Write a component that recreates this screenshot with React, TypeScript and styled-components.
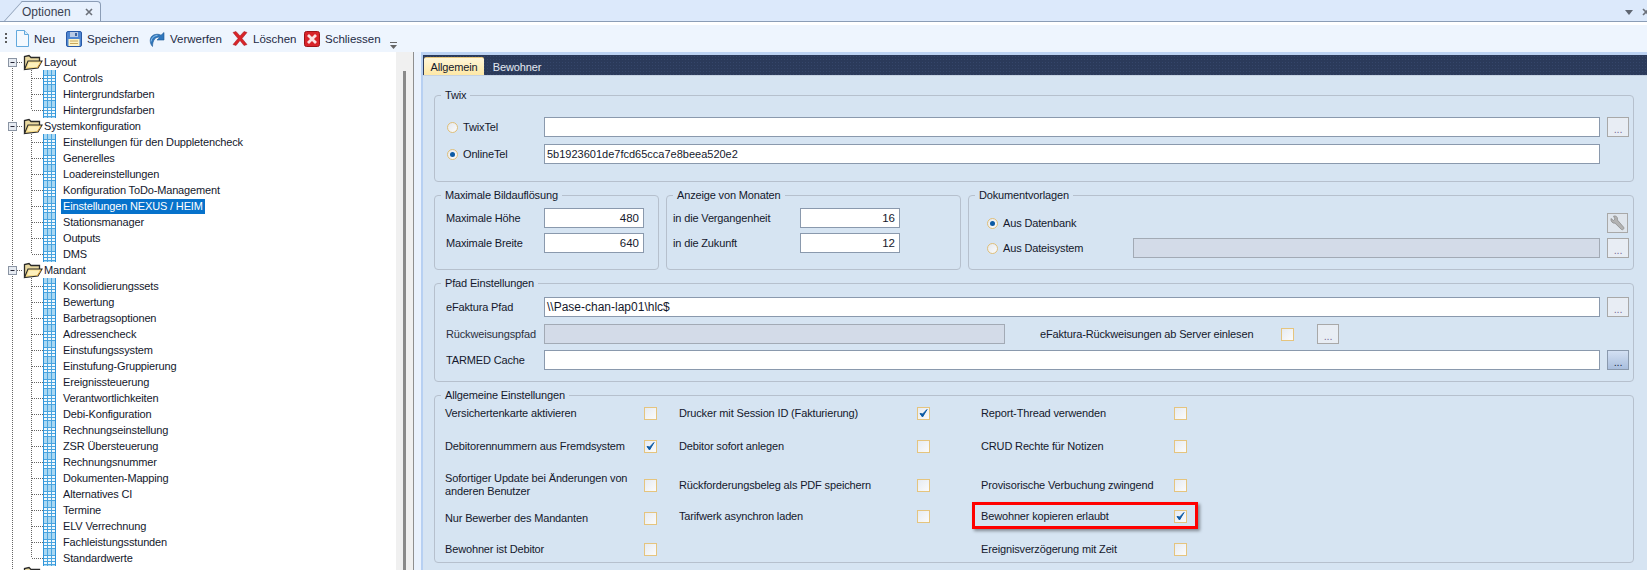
import React from "react"
import styled, { createGlobalStyle } from "styled-components"

const GlobalStyle = createGlobalStyle`
  html, body {
    margin: 0;
    width: 1647px;
    height: 570px;
    overflow: hidden;
    background: #d6e4f2;
  }
  * {
    box-sizing: border-box;
  }
`

const Page = styled.div`
  display: flex;
  flex-direction: column;
  width: 1647px;
  height: 570px;
  overflow: hidden;
  font-family: "Liberation Sans", Arial, sans-serif;
  font-size: 11px;
  letter-spacing: -0.15px;
  color: #14182c;
`

/* document tab strip */
const TabStrip = styled.div`
  display: flex;
  align-items: flex-end;
  justify-content: space-between;
  flex: none;
  height: 22px;
  padding: 0 0 0 22px;
  background: #dce9fb;
  border-bottom: 1px solid #8b9db6;
`
const DocTab = styled.div`
  position: relative;
  display: flex;
  align-items: center;
  justify-content: space-between;
  width: 79px;
  height: 20px;
  padding: 1px 7px 0 0;
  font-size: 12px;
  letter-spacing: 0;
  color: #3a4252;
  background: #e8f1fd;
  border: 1px solid #8b9db6;
  border-bottom: none;
  border-left: none;
  border-top-right-radius: 4px;
  &::before {
    content: "";
    position: absolute;
    left: -9px;
    top: -1px;
    bottom: 0;
    width: 18px;
    background: #e8f1fd;
    border-left: 1px solid #8b9db6;
    border-top: 1px solid #8b9db6;
    transform: skewX(-42deg);
    z-index: 0;
  }
  & > * {
    position: relative;
    z-index: 1;
  }
`
const StripControls = styled.div`
  display: flex;
  align-items: center;
  gap: 9px;
  margin: 0 -3px 5px 0;
`

/* toolbar */
const Toolbar = styled.div`
  display: flex;
  align-items: center;
  flex: none;
  height: 30px;
  padding: 0 0 0 5px;
  border-top: 3px solid #fff;
  background: #eef5fe;
  font-size: 11.5px;
  letter-spacing: 0;
  color: #1d2a44;
`
const Gripper = styled.span`
  width: 2px;
  height: 12px;
  margin-right: 9px;
  background: repeating-linear-gradient(#5c5c5c 0 2px, transparent 2px 4px);
`
const ToolButton = styled.div<{ $width: number }>`
  display: flex;
  align-items: center;
  gap: 5px;
  width: ${p => p.$width}px;
`
const OverflowArrow = styled.div`
  margin: 12px 0 0 2px;
`

/* main area */
const Main = styled.div`
  display: flex;
  flex: 1;
  min-height: 0;
  background: #eaf2fd;
`
const TreePane = styled.div`
  display: flex;
  flex: none;
  width: 414px;
  background: #fff;
  border-right: 1px solid #8f8f8f;
`
const TreeList = styled.div`
  flex: 1;
  padding-top: 2px;
  overflow: hidden;
`
const TreeRow = styled.div`
  display: flex;
  align-items: center;
  height: 16px;
  white-space: nowrap;
`
const TreeLabel = styled.span<{ $selected?: boolean; $root?: boolean }>`
  display: block;
  height: 15px;
  line-height: 15px;
  margin-left: ${p => (p.$root ? 0 : 5)}px;
  padding: 0 ${p => (p.$root ? 1 : 2)}px;
  color: ${p => (p.$selected ? "#fff" : "inherit")};
  background: ${p => (p.$selected ? "#0672cb" : "transparent")};
`
const ScrollTrack = styled.div`
  flex: none;
  width: 17px;
  padding: 19px 7px 0;
  background: #f0f0f0;
`
const ScrollThumb = styled.div`
  width: 3px;
  height: 100%;
  background: #8a8a8a;
`
const Splitter = styled.div`
  flex: none;
  width: 7px;
`
const Content = styled.div`
  display: flex;
  flex-direction: column;
  flex: 1;
  min-width: 0;
  border-top: 3px solid #bdd3f3;
  border-left: 2px solid #b7d0f2;
`
const PageTabs = styled.div`
  display: flex;
  align-items: flex-end;
  flex: none;
  height: 20px;
  padding-left: 1px;
  background-color: #2b3a5a;
  background-image: radial-gradient(#35466a 1px, transparent 1px);
  background-size: 3px 3px;
`
const PageTab = styled.div<{ $active?: boolean }>`
  display: flex;
  align-items: center;
  justify-content: center;
  width: ${p => (p.$active ? 60 : 66)}px;
  height: 19px;
  margin-bottom: -1px;
  color: ${p => (p.$active ? "#14182c" : "#e3e9f2")};
  background: ${p => (p.$active ? "linear-gradient(#fff6d8, #fde7a4)" : "transparent")};
  border-top: 1px solid ${p => (p.$active ? "#e8c77c" : "transparent")};
  border-radius: 2px 2px 0 0;
`
const Body = styled.div`
  flex: 1;
  padding: 19px 13px 0 11px;
  background: #d6e4f2;
  border-top: 1px solid #c5d2e2;
`

/* group boxes */
const Group = styled.div<{ $height: number; $top?: number; $pad?: string }>`
  position: relative;
  height: ${p => p.$height}px;
  margin-top: ${p => p.$top ?? 0}px;
  padding: ${p => p.$pad ?? "0"};
  border: 1px solid #b6c0cd;
  border-radius: 4px;
`
const Legend = styled.span`
  position: absolute;
  top: -8px;
  left: 6px;
  padding: 0 4px;
  line-height: 15px;
  background: #d6e4f2;
`
const MiddleRow = styled.div`
  display: grid;
  grid-template-columns: 225px 295px 1fr;
  column-gap: 7px;
  margin-top: 13px;
`
const FieldGrid = styled.div<{ $label: number; $gap?: number }>`
  display: grid;
  grid-template-columns: ${p => p.$label}px 1fr 22px;
  column-gap: 7px;
  row-gap: ${p => p.$gap ?? 7}px;
  align-items: center;
`
const SizeGrid = styled.div<{ $label: number }>`
  display: grid;
  grid-template-columns: ${p => p.$label}px 100px;
  row-gap: 5px;
  align-items: center;
`
const Field = styled.div<{ $disabled?: boolean; $align?: string; $width?: number; $size?: number }>`
  width: ${p => (p.$width ? `${p.$width}px` : "auto")};
  height: 20px;
  padding: 0 4px 0 2px;
  line-height: 18px;
  font-size: ${p => p.$size ?? 11.5}px;
  letter-spacing: 0;
  text-align: ${p => p.$align ?? "left"};
  white-space: nowrap;
  background: ${p => (p.$disabled ? "#d3dbe8" : "#fff")};
  border: 1px solid ${p => (p.$disabled ? "#a2aab5" : "#8a99ad")};
`
const DotsButton = styled.div<{ $hot?: boolean }>`
  display: flex;
  align-items: flex-end;
  justify-content: center;
  width: 22px;
  height: 20px;
  padding-bottom: 3px;
  font-size: 11px;
  line-height: 8px;
  color: ${p => (p.$hot ? "#22304a" : "#7d6f9c")};
  background: ${p => (p.$hot ? "linear-gradient(#d3e0f3, #a9bedd)" : "#e8edf4")};
  border: 1px solid ${p => (p.$hot ? "#8a99ad" : "#a8a8a8")};
`
const WrenchButton = styled.div`
  display: flex;
  align-items: center;
  justify-content: center;
  width: 21px;
  height: 20px;
  background: #dfe5ec;
  border: 1px solid #a8a8a8;
`
const RadioLabel = styled.label`
  display: flex;
  align-items: center;
  gap: 5px;
`
const RadioDot = styled.span<{ $on?: boolean }>`
  display: flex;
  align-items: center;
  justify-content: center;
  flex: none;
  width: 11px;
  height: 11px;
  border: 1px solid #e0bf78;
  border-radius: 50%;
  background: linear-gradient(135deg, #e4e8ee, #fbfbfb);
  &::after {
    content: "";
    display: ${p => (p.$on ? "block" : "none")};
    width: 5px;
    height: 5px;
    border-radius: 50%;
    background: #0b5aa5;
  }
`
const Box = styled.span<{ $raise?: number }>`
  display: flex;
  align-items: center;
  justify-content: center;
  width: 13px;
  height: 13px;
  margin-bottom: ${p => p.$raise ?? 0}px;
  background: linear-gradient(135deg, #e6ebf2, #fbfbfb);
  border: 1px solid #e5c47e;
`
const RejectRow = styled.div`
  display: flex;
  align-items: center;
  margin-top: 7px;
  margin-bottom: 6px;
`
const RejectLabel = styled.span`
  flex: none;
  width: 98px;
  color: #2c3140;
`
const RejectText = styled.span`
  width: 241px;
  margin-left: 35px;
`
const RejectButton = styled(DotsButton)`
  margin-left: 23px;
`
const OptionsGrid = styled.div`
  display: grid;
  grid-template-columns: 199px 35px 238px 64px 193px 13px;
  grid-template-rows: 20px 46px 32px 34px 28px;
  align-items: center;
`
const OptionText = styled.span<{ $marked?: boolean; $raise?: number }>`
  position: relative;
  line-height: 13px;
  margin-bottom: ${p => p.$raise ?? 0}px;
  ${p =>
    p.$marked &&
    `
    &::after {
      content: "";
      box-sizing: border-box;
      position: absolute;
      left: -9px;
      top: -8px;
      width: 226px;
      height: 27px;
      border: 3px solid #f00;
      box-shadow: 2px 2px 3px rgba(0, 0, 0, 0.4);
    }
  `}
`

/* drawings */
const Guides = ({ root, first, last }: { root?: boolean; first?: boolean; last?: boolean }) =>
  root ? (
    <svg width="23" height="16" style={{ flex: "none" }}>
      <path d={first ? "M12.5 8V16" : "M12.5 0V16"} stroke="#666" strokeDasharray="1 1" />
      <path d="M17 8.5H23" stroke="#666" strokeDasharray="1 1" />
      <rect x="8.5" y="4.5" width="8" height="8" fill="#e6ebf2" stroke="#8a94a3" />
      <path d="M10.5 8.5h4" stroke="#223" />
    </svg>
  ) : (
    <svg width="43" height="16" style={{ flex: "none" }}>
      <path d="M12.5 0V16" stroke="#666" strokeDasharray="1 1" />
      <path d={last ? "M31.5 0V8" : "M31.5 0V16"} stroke="#666" strokeDasharray="1 1" />
      <path d="M32 8.5H43" stroke="#666" strokeDasharray="1 1" />
    </svg>
  )

const FolderIcon = () => (
  <svg width="20" height="17" viewBox="0 0 20 17" style={{ flex: "none" }}>
    <path d="M1.5 15.5V2.5L6 1.5l2 2h8.5V7" fill="#e9d9a0" stroke="#2a2a2a" strokeWidth="1.3" />
    <path d="M1.5 15.5L5 7h14l-4 7-13.5 1.5z" fill="#f8de8c" stroke="#2a2a2a" strokeWidth="1.1" />
    <path d="M6 8.5h11l-2.5 4.5H4.5z" fill="#fdf0bd" />
    <path d="M14 14l4-6" stroke="#e2a33e" />
  </svg>
)

const GridIcon = () => (
  <svg width="13" height="16" viewBox="0 0 13 16" style={{ flex: "none" }}>
    <rect x="0" y="0" width="13" height="16" fill="#a9d8f3" />
    <path d="M4.5 0V16M8.5 0V16M0 5.5H13M0 8.5H13M0 11.5H13M0 14.5H13" stroke="#4aa5e0" />
    <path d="M0.5 0V16M12.5 0V16" stroke="#2f93d8" />
    <path d="M1 6h3v2H1zM5 6h3v2H5zM9 6h3v2H9zM1 9h3v2H1zM5 9h3v2H5zM9 9h3v2H9zM1 12h3v2H1zM5 12h3v2H5zM9 12h3v2H9z" fill="#eef8fd" />
  </svg>
)

const CheckMark = () => (
  <svg width="11" height="11" viewBox="0 0 11 11">
    <path d="M2 5.5L4.5 9 9 1.5 4.7 6z" fill="#0b5aa5" stroke="#0b5aa5" strokeWidth="1" strokeLinejoin="round" />
  </svg>
)

const NewIcon = () => (
  <svg width="13" height="17" viewBox="0 0 13 17">
    <path d="M.5.5h8l4 4v12H.5z" fill="#f4f9fe" stroke="#62a9dd" />
    <path d="M8.5.5v4h4" fill="#d8ebf9" stroke="#62a9dd" />
  </svg>
)

const SaveIcon = () => (
  <svg width="16" height="16" viewBox="0 0 16 16">
    <rect x=".5" y=".5" width="15" height="15" rx="1.5" fill="#4f86d1" stroke="#2859a6" />
    <rect x="4" y="1" width="8" height="5" fill="#b9cbe6" />
    <rect x="9" y="2" width="2" height="3" fill="#3b639f" />
    <rect x="2.5" y="8" width="11" height="7" fill="#fdf3c4" />
    <path d="M4 10h8M4 12.5h8" stroke="#c9a85c" />
  </svg>
)

const DiscardIcon = () => (
  <svg width="16" height="16" viewBox="0 0 16 16">
    <path d="M3.5 15.5C-.5 11 .5 3.5 8 3.2c1.5 0 3 .3 4 1L15 1.5V9H8l2.6-2.4C7 5 3.5 9 3.5 15.5z" fill="#2f77bd" stroke="#1c5794" strokeWidth=".6" />
    <path d="M2 10.5C2.4 7 4.8 4.6 8.5 4.4" stroke="#8cc1ec" strokeWidth="1" fill="none" />
  </svg>
)

const DeleteIcon = () => (
  <svg width="16" height="15" viewBox="0 0 16 15">
    <path d="M1 1.5L4 .5 8 5l4-4.5 3 1L10 7.5l5 6-3 1-4-5-4 5-3-1 5-6z" fill="#d8252a" stroke="#a31419" strokeWidth=".5" />
  </svg>
)

const CloseIcon = () => (
  <svg width="16" height="16" viewBox="0 0 16 16">
    <rect x=".5" y=".5" width="15" height="15" rx="2" fill="#d8242a" stroke="#9d1418" />
    <path d="M4 4l8 8M12 4l-8 8" stroke="#fbe3e3" strokeWidth="2.8" />
  </svg>
)

const WrenchIcon = () => (
  <svg width="15" height="17" viewBox="0 0 15 17">
    <path d="M1 3.5L3.5 5.5 5 4 3.5 1.2C5.5.3 7.5 1.5 7.5 4c0 .6 0 1 .2 1.3l6 7c.9 1.2-.9 3.2-2.2 2.2L5 8.2C3 8.6.4 6.6 1 3.5z" fill="#b2b2b2" stroke="#868686" strokeWidth=".7" />
  </svg>
)

const TinyClose = () => (
  <svg width="8" height="8" viewBox="0 0 8 8">
    <path d="M1 1l6 6M7 1L1 7" stroke="#6b7079" strokeWidth="1.6" />
  </svg>
)

const Chevron = () => (
  <svg width="8" height="5" viewBox="0 0 8 5">
    <path d="M0 0h8L4 5z" fill="#5f6672" />
  </svg>
)

const Overflow = () => (
  <svg width="7" height="7" viewBox="0 0 7 7">
    <path d="M0 .5h7" stroke="#666" />
    <path d="M0 3h7L3.5 7z" fill="#666" />
  </svg>
)

const tree = [
  { name: "Layout", items: ["Controls", "Hintergrundsfarben", "Hintergrundsfarben"] },
  {
    name: "Systemkonfiguration",
    items: [
      "Einstellungen für den Duppletencheck",
      "Generelles",
      "Loadereinstellungen",
      "Konfiguration ToDo-Management",
      "Einstellungen NEXUS / HEIM",
      "Stationsmanager",
      "Outputs",
      "DMS",
    ],
  },
  {
    name: "Mandant",
    items: [
      "Konsolidierungssets",
      "Bewertung",
      "Barbetragsoptionen",
      "Adressencheck",
      "Einstufungssystem",
      "Einstufung-Gruppierung",
      "Ereignissteuerung",
      "Verantwortlichkeiten",
      "Debi-Konfiguration",
      "Rechnungseinstellung",
      "ZSR Übersteuerung",
      "Rechnungsnummer",
      "Dokumenten-Mapping",
      "Alternatives CI",
      "Termine",
      "ELV Verrechnung",
      "Fachleistungsstunden",
      "Standardwerte",
    ],
  },
  { name: "Dokumentenvorlagen", items: [] },
]

const tools = [
  { label: "Neu", icon: <NewIcon />, width: 50 },
  { label: "Speichern", icon: <SaveIcon />, width: 83 },
  { label: "Verwerfen", icon: <DiscardIcon />, width: 83 },
  { label: "Löschen", icon: <DeleteIcon />, width: 72 },
  { label: "Schliessen", icon: <CloseIcon />, width: 84 },
]

const options: [string, boolean, string, boolean, string, boolean][] = [
  ["Versichertenkarte aktivieren", false, "Drucker mit Session ID (Fakturierung)", true, "Report-Thread verwenden", false],
  ["Debitorennummern aus Fremdsystem", true, "Debitor sofort anlegen", false, "CRUD Rechte für Notizen", false],
  ["Sofortiger Update bei Änderungen von anderen Benutzer", false, "Rückforderungsbeleg als PDF speichern", false, "Provisorische Verbuchung zwingend", false],
  ["Nur Bewerber des Mandanten", false, "Tarifwerk asynchron laden", false, "Bewohner kopieren erlaubt", true],
]

const Check = ({ on, raise }: { on: boolean; raise?: number }) => <Box $raise={raise}>{on && <CheckMark />}</Box>

const App: React.FC = () => {
  return (
    <Page>
      <GlobalStyle />
      <TabStrip>
        <DocTab>
          <span>Optionen</span>
          <TinyClose />
        </DocTab>
        <StripControls>
          <Chevron />
          <TinyClose />
        </StripControls>
      </TabStrip>
      <Toolbar>
        <Gripper />
        {tools.map(t => (
          <ToolButton key={t.label} $width={t.width}>
            {t.icon}
            <span>{t.label}</span>
          </ToolButton>
        ))}
        <OverflowArrow>
          <Overflow />
        </OverflowArrow>
      </Toolbar>
      <Main>
        <TreePane>
          <TreeList>
            {tree.map((group, g) => (
              <React.Fragment key={group.name}>
                <TreeRow>
                  <Guides root first={g === 0} />
                  <FolderIcon />
                  <TreeLabel $root>{group.name}</TreeLabel>
                </TreeRow>
                {group.items.map((item, i) => (
                  <TreeRow key={item + i}>
                    <Guides last={i === group.items.length - 1} />
                    <GridIcon />
                    <TreeLabel $selected={item === "Einstellungen NEXUS / HEIM"}>{item}</TreeLabel>
                  </TreeRow>
                ))}
              </React.Fragment>
            ))}
          </TreeList>
          <ScrollTrack>
            <ScrollThumb />
          </ScrollTrack>
        </TreePane>
        <Splitter />
        <Content>
          <PageTabs>
            <PageTab $active>Allgemein</PageTab>
            <PageTab>Bewohner</PageTab>
          </PageTabs>
          <Body>
            <Group $height={87} $pad="21px 4px 0 12px">
              <Legend>Twix</Legend>
              <FieldGrid $label={90}>
                <RadioLabel>
                  <RadioDot />
                  TwixTel
                </RadioLabel>
                <Field />
                <DotsButton>...</DotsButton>
                <RadioLabel>
                  <RadioDot $on />
                  OnlineTel
                </RadioLabel>
                <Field $size={11}>5b1923601de7fcd65cca7e8beea520e2</Field>
              </FieldGrid>
            </Group>
            <MiddleRow>
              <Group $height={75} $pad="12px 0 0 11px">
                <Legend>Maximale Bildauflösung</Legend>
                <SizeGrid $label={98}>
                  <span>Maximale Höhe</span>
                  <Field $align="right">480</Field>
                  <span>Maximale Breite</span>
                  <Field $align="right">640</Field>
                </SizeGrid>
              </Group>
              <Group $height={75} $pad="12px 0 0 6px">
                <Legend>Anzeige von Monaten</Legend>
                <SizeGrid $label={127}>
                  <span>in die Vergangenheit</span>
                  <Field $align="right">16</Field>
                  <span>in die Zukunft</span>
                  <Field $align="right">12</Field>
                </SizeGrid>
              </Group>
              <Group $height={75} $pad="17px 4px 0 18px">
                <Legend>Dokumentvorlagen</Legend>
                <FieldGrid $label={139} $gap={5}>
                  <RadioLabel>
                    <RadioDot $on />
                    Aus Datenbank
                  </RadioLabel>
                  <span />
                  <WrenchButton>
                    <WrenchIcon />
                  </WrenchButton>
                  <RadioLabel>
                    <RadioDot />
                    Aus Dateisystem
                  </RadioLabel>
                  <Field $disabled />
                  <DotsButton>...</DotsButton>
                </FieldGrid>
              </Group>
            </MiddleRow>
            <Group $height={99} $top={13} $pad="13px 4px 0 11px">
              <Legend>Pfad Einstellungen</Legend>
              <FieldGrid $label={91}>
                <span>eFaktura Pfad</span>
                <Field $size={12}>\\Pase-chan-lap01\hlc$</Field>
                <DotsButton>...</DotsButton>
              </FieldGrid>
              <RejectRow>
                <RejectLabel>Rückweisungspfad</RejectLabel>
                <Field $disabled $width={461} />
                <RejectText>eFaktura-Rückweisungen ab Server einlesen</RejectText>
                <Box />
                <RejectButton>...</RejectButton>
              </RejectRow>
              <FieldGrid $label={91}>
                <span>TARMED Cache</span>
                <Field />
                <DotsButton $hot>...</DotsButton>
              </FieldGrid>
            </Group>
            <Group $height={168} $top={13} $pad="7px 0 0 10px">
              <Legend>Allgemeine Einstellungen</Legend>
              <OptionsGrid>
                {options.map((row, i) => {
                  const raise = i === 3 ? 4 : 0
                  return (
                    <React.Fragment key={row[0]}>
                      <OptionText>{row[0]}</OptionText>
                      <Check on={row[1]} />
                      <OptionText $raise={raise}>{row[2]}</OptionText>
                      <Check on={row[3]} raise={raise} />
                      <OptionText $marked={row[5]} $raise={raise}>{row[4]}</OptionText>
                      <Check on={row[5]} raise={raise} />
                    </React.Fragment>
                  )
                })}
                <OptionText>Bewohner ist Debitor</OptionText>
                <Check on={false} />
                <span />
                <span />
                <OptionText>Ereignisverzögerung mit Zeit</OptionText>
                <Check on={false} />
              </OptionsGrid>
            </Group>
          </Body>
        </Content>
      </Main>
    </Page>
  )
}

export default App
